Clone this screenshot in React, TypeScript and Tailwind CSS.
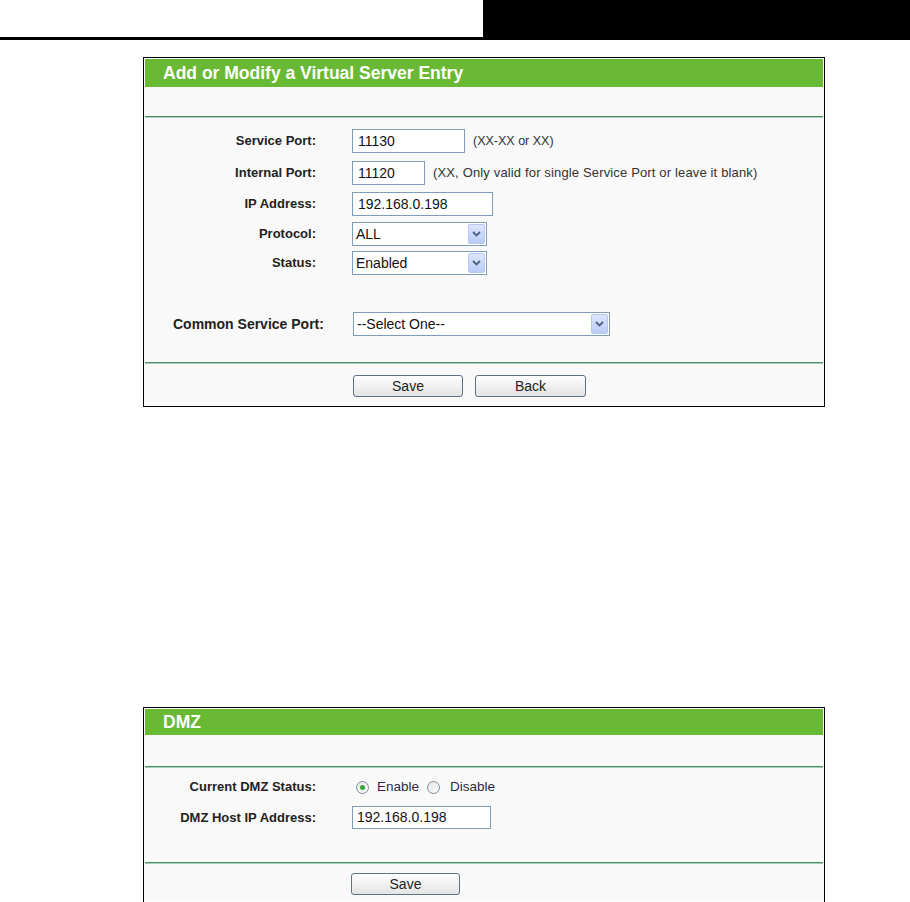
import React from 'react';

const font = "font-['Liberation_Sans',Arial,sans-serif]";

function Divider() {
  return (
    <div>
      <div className="h-[1px] bg-[#4e8e68]" />
      <div className="h-[1px] bg-[#a9ccb8]" />
    </div>
  );
}

function Header({ title, h }: { title: string; h: string }) {
  return (
    <div className={`${h} bg-[#69b934] flex items-center pl-[18px] text-white text-[17.5px] font-bold`}>
      {title}
    </div>
  );
}

function TextBox({ value, w }: { value: string; w: string }) {
  return (
    <div className={`${w} h-[24px] border border-[#7f9db9] bg-white flex items-center pl-[5px] text-[14px] text-[#111]`}>
      {value}
    </div>
  );
}

function SelectBox({ value, w }: { value: string; w: string }) {
  return (
    <div className={`${w} h-[24px] border border-[#7f9db9] bg-white flex items-center justify-between p-[1px]`}>
      <span className="pl-[2px] text-[14px] text-[#111]">{value}</span>
      <span className="w-[17px] h-full rounded-[2px] border border-[#b7c8ef] bg-gradient-to-b from-[#dde6fd] to-[#b9cbf6] flex items-center justify-center">
        <svg width="9" height="6" viewBox="0 0 9 6">
          <path d="M1 1 L4.5 4.5 L8 1" fill="none" stroke="#4d6185" strokeWidth="1.8" />
        </svg>
      </span>
    </div>
  );
}

function Button({ label, w }: { label: string; w: string }) {
  return (
    <div className={`${w} h-[22px] rounded-[3px] border border-[#5f7184] bg-gradient-to-b from-[#ffffff] to-[#e3e3e3] flex items-center justify-center text-[14px] text-[#222]`}>
      {label}
    </div>
  );
}

function Label({ text }: { text: string }) {
  return <div className="w-[171px] text-right text-[13px] font-bold text-[#222]">{text}</div>;
}

function Radio({ checked }: { checked?: boolean }) {
  return (
    <span className="w-[13px] h-[13px] rounded-full border border-[#7d8c9a] bg-gradient-to-br from-[#e4e4e4] to-[#ffffff] flex items-center justify-center">
      {checked && <span className="w-[5px] h-[5px] rounded-full bg-[#3aa23a]" />}
    </span>
  );
}

export default function App() {
  return (
    <div className={`${font} w-[910px] h-[902px] bg-white overflow-hidden`}>
      {/* page header strip */}
      <div className="flex h-[37px]">
        <div className="flex-1" />
        <div className="w-[427px] bg-black" />
      </div>
      <div className="h-[3px] bg-black" />

      {/* Virtual server entry */}
      <div className="mt-[17px] ml-[143px] w-[682px] border border-black p-[1px] bg-[#fbfbfb]">
        <Header title="Add or Modify a Virtual Server Entry" h="h-[28px]" />
        <div className="h-[29px] bg-[#f9f9f9]" />
        <Divider />
        <div className="bg-[#f9f9f9] pt-[11px] h-[244px]">
          <div className="flex items-center gap-[36px]">
            <Label text="Service Port:" />
            <div className="flex items-center gap-[8px]">
              <TextBox value="11130" w="w-[113px]" />
              <span className="text-[12.5px] text-[#333]">(XX-XX or XX)</span>
            </div>
          </div>
          <div className="flex items-center gap-[36px] mt-[8px]">
            <Label text="Internal Port:" />
            <div className="flex items-center gap-[8px]">
              <TextBox value="11120" w="w-[73px]" />
              <span className="text-[13px] tracking-[0.15px] text-[#333]">(XX, Only valid for single Service Port or leave it blank)</span>
            </div>
          </div>
          <div className="flex items-center gap-[36px] mt-[7px]">
            <Label text="IP Address:" />
            <TextBox value="192.168.0.198" w="w-[141px]" />
          </div>
          <div className="flex items-center gap-[36px] mt-[6px]">
            <Label text="Protocol:" />
            <SelectBox value="ALL" w="w-[135px]" />
          </div>
          <div className="flex items-center gap-[36px] mt-[5px]">
            <Label text="Status:" />
            <SelectBox value="Enabled" w="w-[135px]" />
          </div>
          <div className="flex items-center mt-[37px] pl-[28px]">
            <div className="w-[180px] text-[14px] font-bold text-[#222]">Common Service Port:</div>
            <SelectBox value="--Select One--" w="w-[257px]" />
          </div>
        </div>
        <Divider />
        <div className="bg-[#f9f9f9] pt-[11px] pb-[8px] pl-[208px] flex gap-[12px]">
          <Button label="Save" w="w-[110px]" />
          <Button label="Back" w="w-[111px]" />
        </div>
      </div>

      {/* DMZ */}
      <div className="mt-[300px] ml-[143px] w-[682px] border border-black p-[1px] bg-[#fbfbfb]">
        <Header title="DMZ" h="h-[26px]" />
        <div className="h-[31px] bg-[#f9f9f9]" />
        <Divider />
        <div className="bg-[#f9f9f9] pt-[8px] h-[94px]">
          <div className="flex items-center gap-[36px] h-[22px]">
            <Label text="Current DMZ Status:" />
            <div className="flex items-center pl-[4px] text-[13.5px] text-[#2a2a4a]">
              <Radio checked />
              <span className="ml-[8px]">Enable</span>
              <span className="ml-[8px]"><Radio /></span>
              <span className="ml-[10px]">Disable</span>
            </div>
          </div>
          <div className="flex items-center gap-[36px] mt-[8px]">
            <Label text="DMZ Host IP Address:" />
            <div className="w-[139px] h-[23px] border border-[#7f9db9] bg-white flex items-center pl-[4px] text-[14px] text-[#111]">
              192.168.0.198
            </div>
          </div>
        </div>
        <Divider />
        <div className="bg-[#f9f9f9] pt-[9px] pb-[6px] pl-[206px]">
          <Button label="Save" w="w-[109px]" />
        </div>
      </div>
    </div>
  );
}
